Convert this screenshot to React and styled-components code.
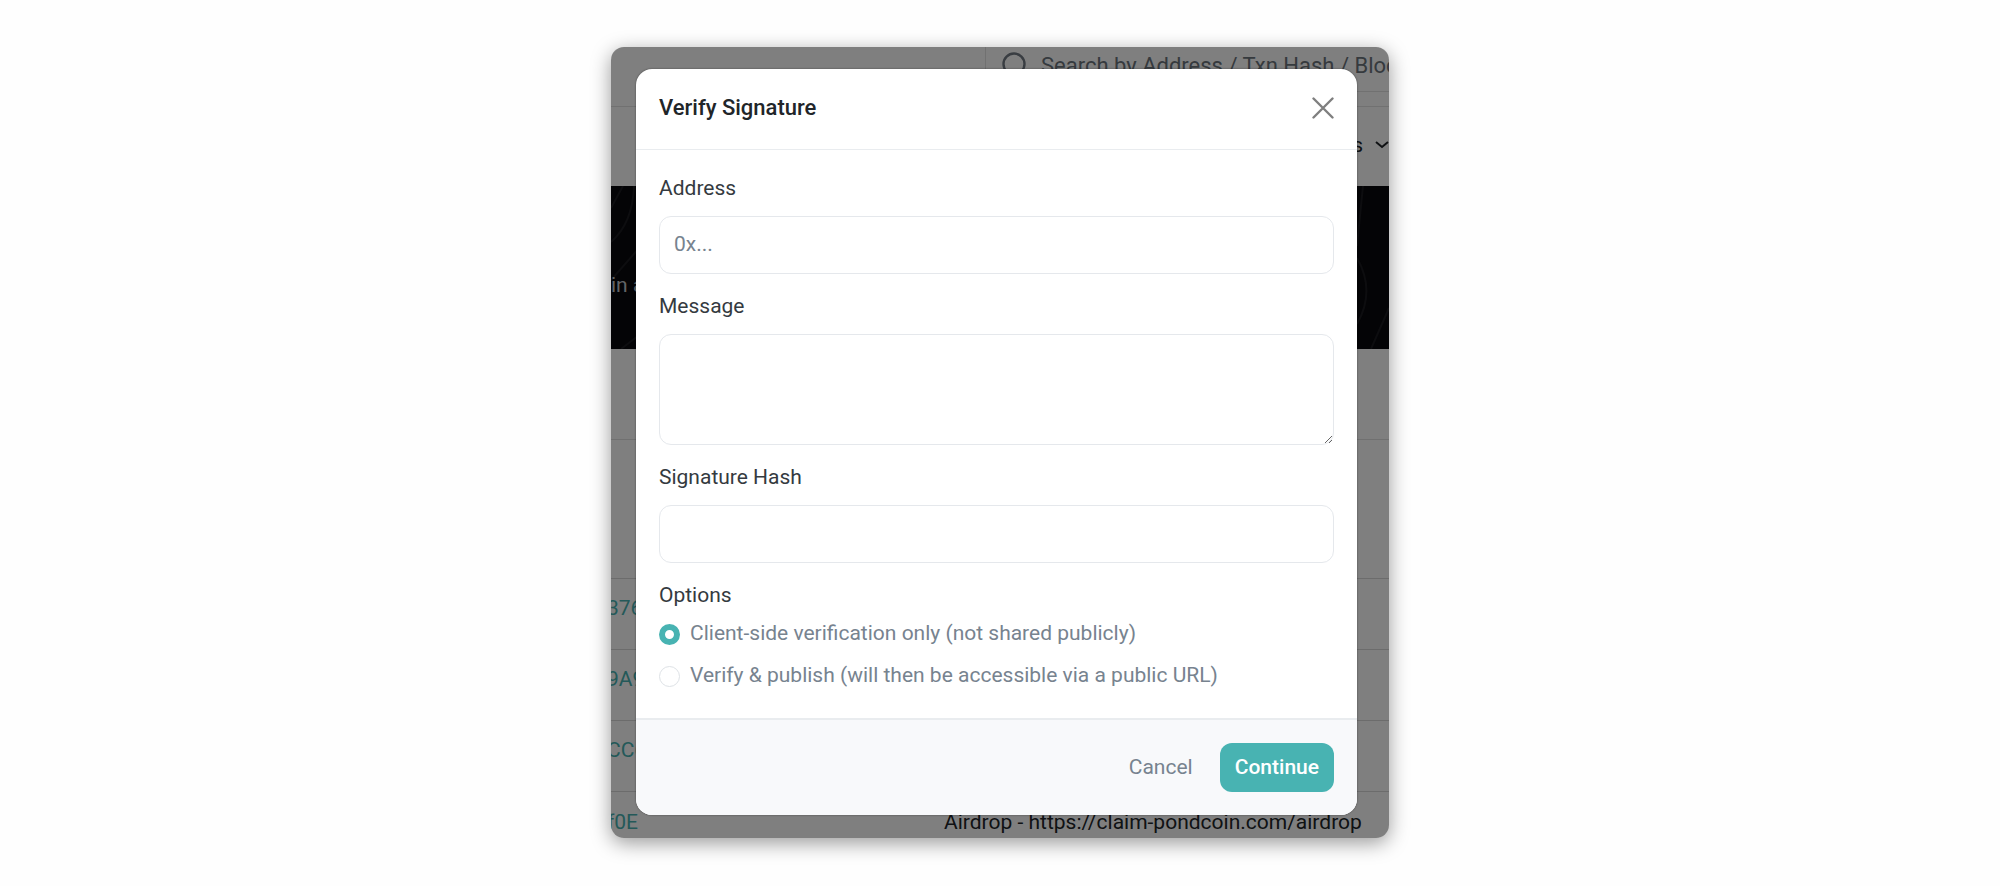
import React from "react";
import styled, { createGlobalStyle } from "styled-components";

const rows = [
  { hash: "376", label: "" },
  { hash: "9A9", label: "" },
  { hash: "CC6", label: "" },
  { hash: "f0E", label: "Airdrop - https://claim-pondcoin.com/airdrop" },
];

const App = () => {
  return (
    <Screen>
      <GlobalStyle />
      <Window>
        <Page>
          <TopBar>
            <SearchBox>
              <svg width="28" height="28" viewBox="0 0 28 28" fill="none">
                <circle cx="14" cy="12" r="10.5" stroke="#737b84" strokeWidth="2.4" />
                <path d="M21 20l6 6" stroke="#737b84" strokeWidth="2.4" />
              </svg>
              <span>Search by Address / Txn Hash / Block</span>
            </SearchBox>
          </TopBar>
          <Nav>
            <span>s</span>
            <svg width="14" height="10" viewBox="0 0 14 10" fill="none">
              <path d="M1 2l6 5 6-5" stroke="#212529" strokeWidth="2" />
            </svg>
          </Nav>
          <Hero>
            <HeroLines viewBox="0 0 778 163" preserveAspectRatio="none">
              <path d="M0 56C14 44 22 26 23 0M0 22L12 0M0 94L30 60M10 163L40 140" />
              <path d="M746 72C762 100 754 124 746 138M760 163L778 122M752 0L746 60" />
            </HeroLines>
            <span>in a</span>
          </Hero>
          <Filters />
          <TableHead />
          <Table>
            <tbody>
              {rows.map((row) => (
                <tr key={row.hash}>
                  <HashCell>
                    <a href="#hash">{row.hash}</a>
                  </HashCell>
                  <td>{row.label}</td>
                </tr>
              ))}
            </tbody>
          </Table>
        </Page>

        <Overlay>
          <Modal role="dialog" aria-labelledby="title">
            <ModalHeader>
              <Title id="title">Verify Signature</Title>
              <CloseButton type="button" aria-label="Close">
                <svg width="22" height="22" viewBox="0 0 22 22" fill="none">
                  <path
                    d="M1.5 1.5l19 19M20.5 1.5l-19 19"
                    stroke="#7f7f7f"
                    strokeWidth="2.4"
                    strokeLinecap="round"
                  />
                </svg>
              </CloseButton>
            </ModalHeader>
            <ModalBody>
              <Label htmlFor="address">Address</Label>
              <Input id="address" type="text" placeholder="0x..." />
              <Label htmlFor="message">Message</Label>
              <TextArea id="message" />
              <Label htmlFor="signature">Signature Hash</Label>
              <Input id="signature" type="text" />
              <Options>
                <Legend>Options</Legend>
                <Option>
                  <Radio type="radio" name="option" defaultChecked />
                  Client-side verification only (not shared publicly)
                </Option>
                <Option>
                  <Radio type="radio" name="option" />
                  Verify &amp; publish (will then be accessible via a public URL)
                </Option>
              </Options>
            </ModalBody>
            <ModalFooter>
              <Button type="button">Cancel</Button>
              <Button type="button" $primary>
                Continue
              </Button>
            </ModalFooter>
          </Modal>
        </Overlay>
      </Window>
    </Screen>
  );
};

export default App;

const GlobalStyle = createGlobalStyle`
  * {
    box-sizing: border-box;
  }

  body {
    margin: 0;
    background-color: #fefefe;
    color: #212529;
    font-family: Roboto, "Liberation Sans", sans-serif;
    font-size: 21px;
    line-height: 30px;
  }

  input, textarea, button {
    font: inherit;
  }
`;

const Screen = styled.div`
  display: flex;
  justify-content: center;
  padding: 47px 24px;
`;

const Window = styled.div`
  display: grid;
  width: 100%;
  max-width: 778px;
  overflow: hidden;
  border-radius: 13px;
  background-color: white;
  box-shadow: 0 5px 20px rgba(0, 0, 0, 0.4);
`;

/* the page and the overlay share one grid cell */
const Page = styled.div`
  grid-area: 1 / 1;
  min-width: 0;
  overflow: hidden;
`;

const TopBar = styled.div`
  display: flex;
  justify-content: flex-end;
  height: 60px;
  border-bottom: 1px solid #e2e2e2;
`;

const SearchBox = styled.div`
  display: flex;
  align-items: center;
  gap: 13px;
  width: 404px;
  height: 45px;
  padding: 0 0 6px 14px;
  border: solid #e2e2e2;
  border-width: 0 0 1px 1px;
  color: #6c757d;
  font-size: 22px;
  white-space: nowrap;

  svg {
    flex-shrink: 0;
  }
`;

const Nav = styled.div`
  display: flex;
  justify-content: flex-end;
  align-items: center;
  gap: 12px;
  height: 79px;
  padding-bottom: 4px;
`;

const Hero = styled.div`
  display: grid;
  align-items: center;
  height: 163px;
  background-color: #08080c;
  color: #c4c8cc;

  span {
    grid-area: 1 / 1;
    padding-top: 34px;
  }
`;

const HeroLines = styled.svg`
  grid-area: 1 / 1;
  width: 100%;
  height: 163px;
  fill: none;
  stroke: #1a1a1f;
  stroke-width: 2;
`;

const Filters = styled.div`
  height: 91px;
  border-bottom: 1px solid #e0e0e0;
`;

const TableHead = styled.div`
  height: 138px;
`;

const Table = styled.table`
  width: 100%;
  border-collapse: collapse;

  td {
    height: 71px;
    padding: 0 0 12px;
    border-top: 1px solid #d8d8d8;
    white-space: nowrap;
  }

  tr:last-child td {
    height: 46px;
    padding: 14px 0 0;
  }
`;

const HashCell = styled.td`
  width: 333px;

  a {
    margin-left: -4px;
    color: #48b3b2;
    text-decoration: none;
  }
`;

const Overlay = styled.div`
  z-index: 1;
  grid-area: 1 / 1;
  min-width: 0;
  padding: 22px 32px 22px 25px;
  background-color: rgba(0, 0, 0, 0.5);
`;

const Modal = styled.div`
  overflow: hidden;
  border-radius: 16px;
  background-color: white;
  box-shadow: 0 0 2px rgba(0, 0, 0, 0.5);
`;

const ModalHeader = styled.div`
  display: flex;
  justify-content: space-between;
  align-items: center;
  height: 81px;
  padding: 0 23px 2px;
  border-bottom: 1px solid #e9ecef;
`;

const Title = styled.h1`
  margin: 0;
  font-size: 22px;
  font-weight: 500;
`;

const CloseButton = styled.button`
  display: flex;
  padding: 0;
  border: none;
  background: none;
  cursor: pointer;
`;

const ModalBody = styled.div`
  padding: 23px 23px 28px;
  color: #343a40;
`;

const Label = styled.label`
  display: block;
  margin-bottom: 13px;
`;

const Input = styled.input`
  display: block;
  width: 100%;
  height: 58px;
  margin-bottom: 17px;
  padding: 0 14px 2px;
  border: 1px solid #e5e8ec;
  border-radius: 12px;
  outline: none;
  background-color: white;

  &::placeholder {
    color: #77838f;
    opacity: 1;
  }
`;

const TextArea = styled.textarea`
  display: block;
  width: 100%;
  height: 111px;
  margin-bottom: 17px;
  padding: 12px 14px;
  border: 1px solid #e5e8ec;
  border-radius: 12px;
  outline: none;
  background-color: white;
  resize: vertical;
`;

const Options = styled.fieldset`
  display: flex;
  flex-direction: column;
  gap: 12px;
  margin: 0;
  padding: 0;
  border: none;
`;

const Legend = styled.legend`
  margin-bottom: 8px;
  padding: 0;
`;

const Option = styled.label`
  display: flex;
  align-items: center;
  gap: 10px;
  color: #77838f;
`;

const Radio = styled.input`
  flex-shrink: 0;
  width: 21px;
  height: 21px;
  margin: 2px 0 0;
  border: 1px solid #dee2e6;
  border-radius: 50%;
  background-color: white;
  appearance: none;

  &:checked {
    border: 6px solid #48b3b2;
  }
`;

const ModalFooter = styled.div`
  display: flex;
  justify-content: flex-end;
  align-items: center;
  gap: 12px;
  height: 97px;
  padding: 0 23px;
  border-top: 2px solid #e9ecef;
  background-color: #f8f9fb;
`;

const Button = styled.button`
  height: 49px;
  padding: 0 15px 2px;
  border: none;
  border-radius: 12px;
  background-color: ${(props) => (props.$primary ? "#48b3b2" : "transparent")};
  color: ${(props) => (props.$primary ? "white" : "#77838f")};
  font-weight: ${(props) => (props.$primary ? 500 : 400)};
  cursor: pointer;
`;
